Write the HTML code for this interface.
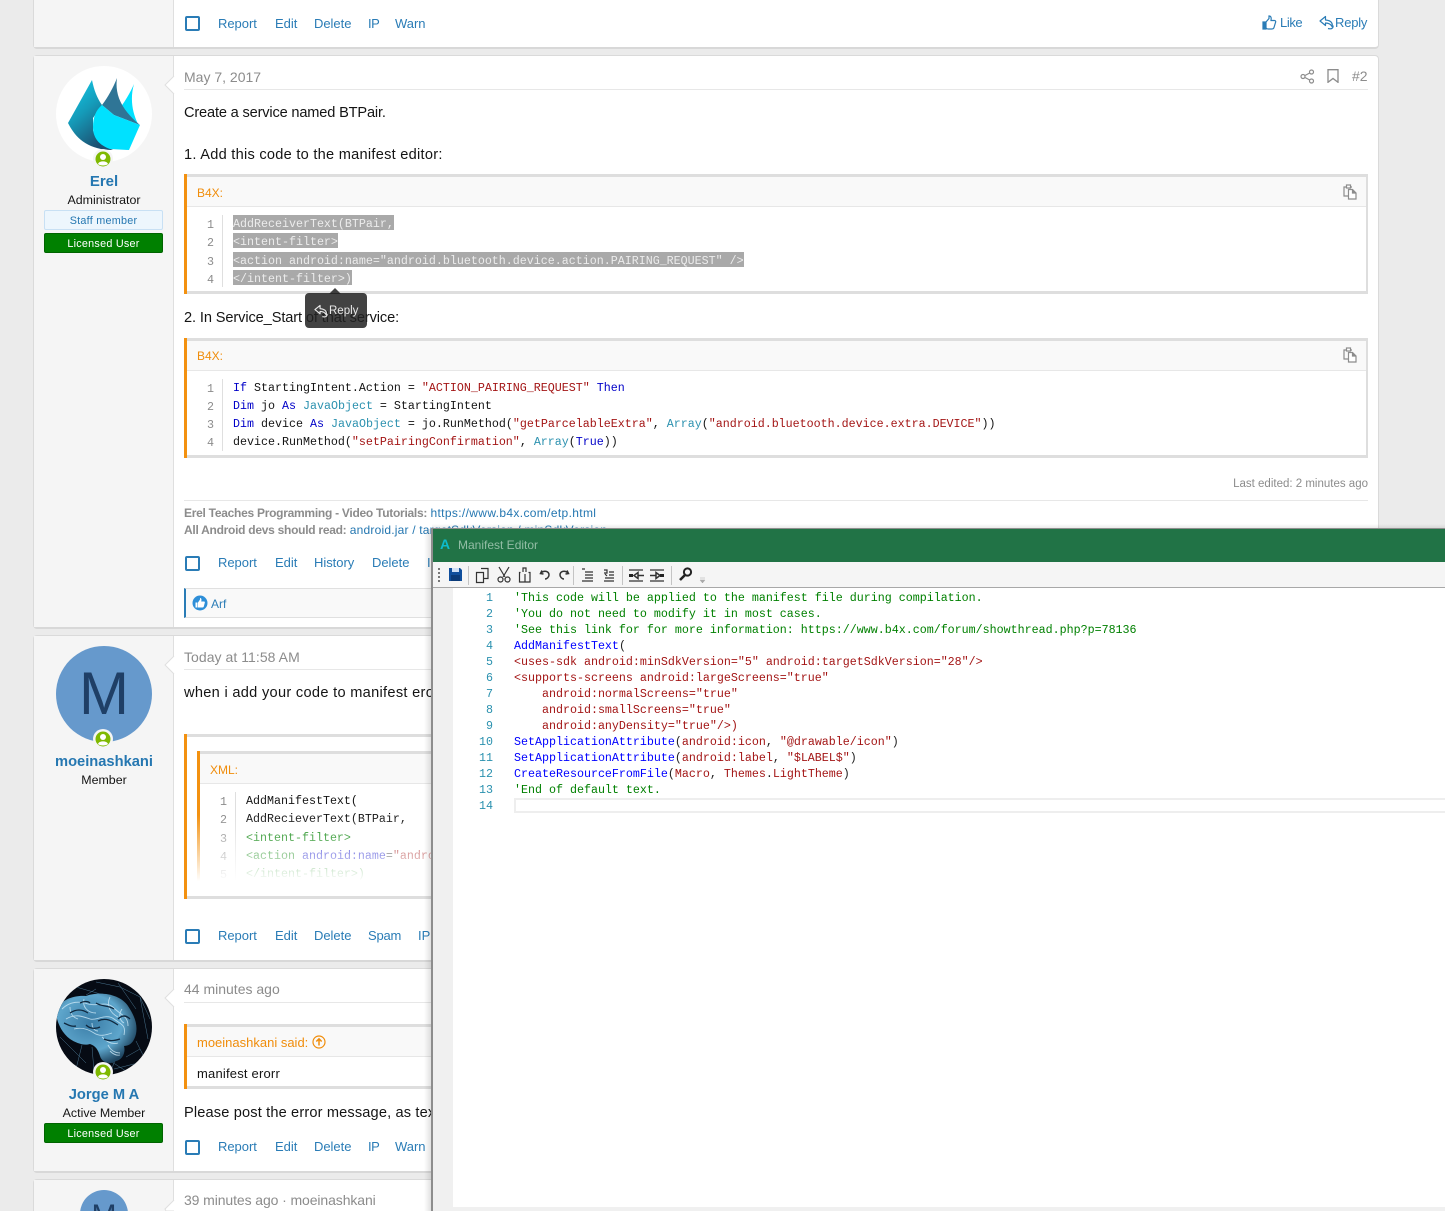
<!DOCTYPE html>
<html><head><meta charset="utf-8"><style>
html,body{margin:0;padding:0;width:1445px;height:1211px;overflow:hidden}
body{background:#ebebeb;font-family:"Liberation Sans",sans-serif;color:#141414}
#w{position:absolute;left:0;top:0;width:1445px;height:1211px;overflow:hidden;background:#ebebeb}
div,span.a{position:absolute;box-sizing:border-box}
.t{position:absolute;white-space:nowrap;line-height:20px;height:20px}
.card{left:33px;width:1346px;background:#fff;border:1px solid #dadada;border-bottom:2px solid #d8d8d8;border-radius:4px;overflow:hidden}
.side{left:34px;width:140px;background:#f5f5f5;border-right:1px solid #dfdfdf}
.l{color:#2a7cb6;font-size:13px;letter-spacing:-.03px}
.g{color:#8c8c8c;font-size:14px}
.b{font-size:14.6px;margin-top:1px}
.hr{height:1px;background:#e7e7e7}
.cb{width:15px;height:15px;left:185px;border:2px solid #2a7cb6;border-radius:2px;background:#fff}
.name{color:#2577b1;font-weight:bold;font-size:14.7px;width:140px;left:34px;text-align:center;margin-top:1px}
.role{font-size:12.4px;width:140px;left:34px;text-align:center}
.badge{left:44px;width:119px;height:20px;font-size:10.8px;line-height:21px;text-align:center;border-radius:2px;letter-spacing:.25px}
.lic{background:#008000;border:1px solid #006400;color:#fff}
.staff{background:#edf6fd;border:1px solid #c8e0f4;color:#2577b1}
.ava{left:56px;width:96px;height:96px;border-radius:50%;overflow:hidden;text-align:center}
.on{width:20px;height:20px;border-radius:50%;background:#f5f5f5}
.q{border:solid #dedede;border-width:3px 2px 3px 0;background:#fff}
.qb{position:absolute;left:0;top:-3px;bottom:-3px;width:3px;background:#f39110}
.qh{left:3px;right:0;top:0;height:30px;background:#f9f9f9;border-bottom:1px solid #e7e7e7}
.qt{color:#f08d0b;font-size:12px;margin-top:1px}
.m{font-family:"Liberation Mono",monospace;font-size:11.67px;line-height:16px;height:16px;position:absolute;white-space:pre}
.cd{margin-top:1px}
.n{color:#8c8c8c;text-align:right;width:14px}
.v{width:1px;background:#dfdfdf}
.sel{background:#a9a9a9;color:#ececec;line-height:18px;height:15px}
.ty{color:#2b91af}.st{color:#a31515}
.vb{color:#0000c8}
.c{color:#008000}.r{color:#a31515}.u{color:#0000ff}.d{color:#222}
.ln{left:463px;width:30px;color:#2a91af;text-align:right;margin-top:1px}
.tc{left:514px;margin-top:1px}
</style></head><body><div id="w">

<!-- post 1 -->
<div class="card" style="top:-10px;height:59px"></div>
<div class="side" style="top:0;height:47px"></div>
<div class="cb" style="top:16px"></div>
<span class="t l" style="left:218px;top:14px">Report</span>
<span class="t l" style="left:275px;top:14px">Edit</span>
<span class="t l" style="left:314px;top:14px">Delete</span>
<span class="t l" style="left:368px;top:14px;letter-spacing:-.5px">IP</span>
<span class="t l" style="left:395px;top:14px">Warn</span>
<svg style="position:absolute;left:1262px;top:15px" width="15" height="15" viewBox="0 0 15 15" fill="none" stroke="#2a7cb6" stroke-width="1.2"><path d="M1 7h3v7H1z" fill="#2a7cb6"/><path d="M4 7l3-3.5V1c2 0 2.5 1.500 2 4.500h3.500c1 0 1.500 1 1 2l-1.500 5c-.3 1-1 1.500-2 1.500H6c-1 0-1.500-.5-2-1"/></svg>
<span class="t l" style="left:1280px;top:13px;letter-spacing:-.4px">Like</span>
<svg style="position:absolute;left:1319px;top:15px" width="15" height="15" viewBox="0 0 15 15" fill="none" stroke="#2a7cb6" stroke-width="1.200" stroke-linejoin="round"><path d="M6.500 1.500L1 6l5.500 4.500V8c3 0 5 .8 6.500 3.500.700-2 .400-6-6.500-6.500z"/><path d="M9 13.500c3.500 1 5.500-.5 5-3"/></svg>
<span class="t l" style="left:1335px;top:13px;letter-spacing:-.2px">Reply</span>

<!-- post 2 -->
<div class="card" style="top:55px;height:574px"></div>
<div class="side" style="top:56px;height:571px"></div>
<svg style="position:absolute;left:164px;top:76px" width="11" height="20"><path d="M10 0L1 9l9 9" fill="#fff" stroke="#dfdfdf"/></svg>
<div class="ava" style="top:66px;background:#fff"></div>
<svg style="position:absolute;left:56px;top:66px" width="96" height="96" viewBox="56 66 96 96">
<defs><linearGradient id="s1" x1="0" y1="0" x2=".55" y2="1"><stop offset="0" stop-color="#12d0ee"/><stop offset=".5" stop-color="#159ab8"/><stop offset="1" stop-color="#1c4f70"/></linearGradient></defs>
<path d="M68 123L92 80c2 10 5 18 10 25L93 118v12c2 9 8 15 20 20-26 0-38-13-45-27z" fill="url(#s1)"/>
<path d="M134 84c-3 7-8 16-14 24l18 16c-6-12-8-26-4-40z" fill="#00e0ff"/>
<path d="M117 78c-2 14 2 30 23 47l-26-10-12-10c6-8 11-17 15-27z" fill="#2f7596"/>
<path d="M102 105l12 10 26 10-11 25-19-1c-11-4-17-11-17-22 0-10 3-17 9-22z" fill="#00e1ff"/>
</svg>
<div class="on" style="left:93px;top:149px"></div>
<svg style="position:absolute;left:95px;top:151px" width="16" height="16" viewBox="0 0 16 16"><circle cx="8" cy="8" r="7.500" fill="#7fb900"/><circle cx="8" cy="6" r="3" fill="#fff"/><path d="M3 13c1-3.500 9-3.500 10 0-2 2-8 2-10 0z" fill="#fff"/></svg>
<span class="t name" style="top:171px;font-size:15px">Erel</span>
<span class="t role" style="top:190px">Administrator</span>
<div class="badge staff" style="top:210px">Staff member</div>
<div class="badge lic" style="top:233px">Licensed User</div>

<span class="t g" style="left:184px;top:67px">May 7, 2017</span>
<div class="hr" style="left:184px;width:1184px;top:89px"></div>
<svg style="position:absolute;left:1300px;top:69px" width="15" height="15" viewBox="0 0 15 15" fill="none" stroke="#8c8c8c" stroke-width="1.200"><circle cx="3" cy="7.500" r="2"/><circle cx="11.500" cy="3" r="2"/><circle cx="11.500" cy="12" r="2"/><path d="M5 6.500l4.700-2.500M5 8.500l4.700 2.500"/></svg>
<svg style="position:absolute;left:1327px;top:69px" width="12" height="14" viewBox="0 0 12 14" fill="none" stroke="#8c8c8c" stroke-width="1.300"><path d="M1 .7h10v12.600L6 9.500l-5 3.800z"/></svg>
<span class="t g" style="left:1352px;top:66px">#2</span>

<span class="t b" style="left:184px;top:102px;letter-spacing:-.17px">Create a service named BTPair.</span>
<span class="t b" style="left:184px;top:144px;letter-spacing:.26px">1. Add this code to the manifest editor:</span>

<div class="q" style="left:184px;top:174px;width:1184px;height:120px"><div class="qb" style="left:0"></div><div class="qh"></div></div>
<span class="t qt" style="left:197px;top:182px">B4X:</span>
<svg style="position:absolute;left:1343px;top:184px" width="14" height="16" viewBox="0 0 14 16" fill="none" stroke="#8c8c8c" stroke-width="1.200"><path d="M3.500 3H1v9h4M9 3H7"/><rect x="3.500" y="1" width="4" height="3" fill="#fff"/><path d="M5.500 5.500h4l3.500 3.500v6h-7.500z" fill="#fff"/><path d="M9.500 5.500v3.500H13" fill="#8c8c8c"/></svg>
<div class="v" style="left:222px;top:215px;height:72px"></div>
<span class="m n" style="left:200px;top:217px">1</span><span class="m n" style="left:200px;top:235px">2</span><span class="m n" style="left:200px;top:254px">3</span><span class="m n" style="left:200px;top:272px">4</span>
<span class="m sel" style="left:233px;top:215px">AddReceiverText(BTPair,</span>
<span class="m sel" style="left:233px;top:233px">&lt;intent-filter&gt;</span>
<span class="m sel" style="left:233px;top:252px">&lt;action android:name="android.bluetooth.device.action.PAIRING_REQUEST" /&gt;</span>
<span class="m sel" style="left:233px;top:270px">&lt;/intent-filter&gt;)</span>

<span class="t b" style="left:184px;top:307px;letter-spacing:-.11px">2. In Service_Start of that service:</span>
<div style="left:305px;top:293px;width:62px;height:35px;background:rgba(35,35,35,.86);border-radius:4px"></div>
<svg style="position:absolute;left:329px;top:288px" width="12" height="6"><path d="M0 6L6 0l6 6z" fill="rgba(35,35,35,.86)"/></svg>
<svg style="position:absolute;left:314px;top:304px" width="14" height="14" viewBox="0 0 15 15" fill="none" stroke="#e8e8e8" stroke-width="1.200" stroke-linejoin="round"><path d="M6.500 1.500L1 6l5.500 4.500V8c3 0 5 .8 6.500 3.500.700-2 .400-6-6.500-6.500z"/><path d="M9 13.500c3.500 1 5.500-.5 5-3"/></svg>
<span class="t" style="left:329px;top:301px;font-size:11.500px;color:#e8e8e8">Reply</span>

<div class="q" style="left:184px;top:338px;width:1184px;height:120px"><div class="qb"></div><div class="qh"></div></div>
<span class="t qt" style="left:197px;top:345px">B4X:</span>
<svg style="position:absolute;left:1343px;top:347px" width="14" height="16" viewBox="0 0 14 16" fill="none" stroke="#8c8c8c" stroke-width="1.200"><path d="M3.500 3H1v9h4M9 3H7"/><rect x="3.500" y="1" width="4" height="3" fill="#fff"/><path d="M5.500 5.500h4l3.500 3.500v6h-7.500z" fill="#fff"/><path d="M9.500 5.500v3.500H13" fill="#8c8c8c"/></svg>
<div class="v" style="left:222px;top:379px;height:72px"></div>
<span class="m n" style="left:200px;top:381px">1</span><span class="m n" style="left:200px;top:399px">2</span><span class="m n" style="left:200px;top:417px">3</span><span class="m n" style="left:200px;top:435px">4</span>
<span class="m cd" style="left:233px;top:379px"><span class="vb">If</span> StartingIntent.Action = <span class="st">"ACTION_PAIRING_REQUEST"</span> <span class="vb">Then</span></span>
<span class="m cd" style="left:233px;top:397px"><span class="vb">Dim</span> jo <span class="vb">As</span> <span class="ty">JavaObject</span> = StartingIntent</span>
<span class="m cd" style="left:233px;top:415px"><span class="vb">Dim</span> device <span class="vb">As</span> <span class="ty">JavaObject</span> = jo.RunMethod(<span class="st">"getParcelableExtra"</span>, <span class="ty">Array</span>(<span class="st">"android.bluetooth.device.extra.DEVICE"</span>))</span>
<span class="m cd" style="left:233px;top:433px">device.RunMethod(<span class="st">"setPairingConfirmation"</span>, <span class="ty">Array</span>(<span class="vb">True</span>))</span>

<span class="t" style="right:77px;top:474px;font-size:11.500px;color:#8c8c8c">Last edited: 2 minutes ago</span>
<div class="hr" style="left:184px;width:1184px;top:500px"></div>
<span class="t" style="left:184px;top:503px;font-size:12px;color:#8c8c8c"><b style="letter-spacing:-.27px">Erel Teaches Programming - Video Tutorials:</b> <span style="color:#2577b1;letter-spacing:.35px">https://www.b4x.com/etp.html</span></span>
<span class="t" style="left:184px;top:520px;font-size:12px;color:#8c8c8c"><b style="letter-spacing:-.27px">All Android devs should read:</b> <span style="color:#2577b1;letter-spacing:.2px">android.jar / targetSdkVersion / minSdkVersion</span></span>
<div class="cb" style="top:556px"></div>
<span class="t l" style="left:218px;top:553px">Report</span>
<span class="t l" style="left:275px;top:553px">Edit</span>
<span class="t l" style="left:314px;top:553px">History</span>
<span class="t l" style="left:372px;top:553px">Delete</span>
<span class="t l" style="left:427px;top:553px">IP</span>
<div style="left:184px;top:588px;width:1184px;height:30px;background:#f9f9f9;border-top:1px solid #e0e0e0;border-bottom:1px solid #e0e0e0;border-left:2px solid #2a7cb6"></div>
<svg style="position:absolute;left:192px;top:595px" width="16" height="16" viewBox="0 0 16 16"><circle cx="8" cy="8" r="7.500" fill="#2e8fd8"/><path d="M3.500 7.500h2v5h-2zM6 7.500l2-3V3c1.500 0 1.800 1.500 1.200 3.500h2.800c.8 0 1 .7.800 1.300l-1 3.700c-.2.600-.6 1-1.300 1H6z" fill="#fff"/></svg>
<span class="t" style="left:211px;top:594px;font-size:12px;color:#2a7cb6">Arf</span>

<!-- post 3 -->
<div class="card" style="top:635px;height:327px"></div>
<div class="side" style="top:636px;height:324px"></div>
<svg style="position:absolute;left:164px;top:656px" width="11" height="20"><path d="M10 0L1 9l9 9" fill="#fff" stroke="#dfdfdf"/></svg>
<div class="ava" style="top:646px;background:#6699cc;color:#1f3f66;font-size:60px;line-height:96px">M</div>
<div class="on" style="left:93px;top:729px"></div>
<svg style="position:absolute;left:95px;top:731px" width="16" height="16" viewBox="0 0 16 16"><circle cx="8" cy="8" r="7.500" fill="#7fb900"/><circle cx="8" cy="6" r="3" fill="#fff"/><path d="M3 13c1-3.500 9-3.500 10 0-2 2-8 2-10 0z" fill="#fff"/></svg>
<span class="t name" style="top:751px">moeinashkani</span>
<span class="t role" style="top:770px">Member</span>
<span class="t g" style="left:184px;top:647px;letter-spacing:.05px">Today at 11:58 AM</span>
<div class="hr" style="left:184px;width:1184px;top:669px"></div>
<span class="t b" style="left:184px;top:682px;letter-spacing:.3px">when i add your code to manifest erorr</span>
<div class="q" style="left:184px;top:734px;width:1184px;height:165px"><div class="qb"></div></div>
<div style="left:197px;top:751px;width:1170px;height:135px;border-top:3px solid #dedede"><div class="qb" style="top:-3px;bottom:0"></div><div class="qh"></div></div>
<span class="t qt" style="left:210px;top:759px">XML:</span>
<div class="v" style="left:235px;top:792px;height:88px"></div>
<span class="m n" style="left:213px;top:794px">1</span><span class="m n" style="left:213px;top:812px">2</span><span class="m n" style="left:213px;top:831px">3</span><span class="m n" style="left:213px;top:849px">4</span><span class="m n" style="left:213px;top:867px">5</span>
<span class="m cd" style="left:246px;top:792px">AddManifestText(</span>
<span class="m cd" style="left:246px;top:810px">AddRecieverText(BTPair,</span>
<span class="m cd" style="left:246px;top:829px;color:#008000">&lt;intent-filter&gt;</span>
<span class="m cd" style="left:246px;top:847px"><span style="color:#008000">&lt;action</span> <span style="color:#0000c8">android:name</span>=<span class="st">"android.bluetooth.device.action.PAIRING_REQUEST"</span></span>
<span class="m cd" style="left:246px;top:865px;color:#008000">&lt;/intent-filter&gt;)</span>
<div style="left:187px;top:815px;width:1180px;height:72px;background:linear-gradient(to bottom,rgba(255,255,255,0),#fff 92%)"></div>
<div class="cb" style="top:929px"></div>
<span class="t l" style="left:218px;top:926px">Report</span>
<span class="t l" style="left:275px;top:926px">Edit</span>
<span class="t l" style="left:314px;top:926px">Delete</span>
<span class="t l" style="left:368px;top:926px;letter-spacing:-.2px">Spam</span>
<span class="t l" style="left:418px;top:926px">IP</span>

<!-- post 4 -->
<div class="card" style="top:968px;height:205px"></div>
<div class="side" style="top:969px;height:202px"></div>
<svg style="position:absolute;left:164px;top:989px" width="11" height="20"><path d="M10 0L1 9l9 9" fill="#fff" stroke="#dfdfdf"/></svg>
<svg style="position:absolute;left:56px;top:979px" width="96" height="96" viewBox="0 0 96 96">
<defs><clipPath id="cc"><circle cx="48" cy="48" r="48"/></clipPath><radialGradient id="br" cx=".42" cy=".42" r=".62"><stop offset="0" stop-color="#3a7ca6"/><stop offset=".65" stop-color="#5ea6cc"/><stop offset="1" stop-color="#1f4560"/></radialGradient></defs>
<g clip-path="url(#cc)"><rect width="96" height="96" fill="#060b14"/>
<g fill="none" stroke="#4a7590" stroke-width=".5"><path d="M40 3L64 8 84 18 94 40M62 4L80 30M20 8L48 16M84 18L92 60M80 62L90 82 58 90M62 74L54 94M36 68L38 92M26 66L20 90M4 58L30 84M70 78L84 70M48 78L70 92M40 10L30 16"/></g>
<path d="M0 34C2 22 16 16 30 17c14-5 34-2 42 10 6 9 10 18 8 28-2 8-6 12-12 12 2 7-2 14-8 15-6 4-14 2-16-5-2-6-4-10-10-12-6 2-14-1-20-5C6 54 1 44 0 34z" fill="url(#br)"/>
<g fill="none" stroke="#cfeaf8" stroke-width=".9" opacity=".8"><path d="M6 30c8-8 18-8 26-5s18-4 26 4 14 8 14 18M10 40c10-6 18-2 24 0s16-6 24 0 12 6 10 16M18 50c8-2 14 0 20 4s12 2 18 0M46 58c4 4 10 8 16 6M28 20c-2 8 4 14 12 14M54 18c-4 8 0 16 8 20M14 28c0 6 2 10 8 12M66 30c-4 6-2 12 2 14M36 44c0 4 2 8 6 8M52 66c2 4 6 8 12 8M54 72c3 3 6 5 10 4"/></g>
<g fill="none" stroke="#10283e" stroke-width="1.300"><path d="M14 34c6-4 12-4 18 0M40 24c6 4 12 2 18 6M42 42c8-4 14 0 20 4M30 46c4 4 10 4 14 2M62 40c4-4 8-4 12 0M48 60c4 2 10 2 16 0M24 24c4-2 8-2 10 0M8 44c4 2 8 4 12 3"/></g>
</g></svg>
<div class="on" style="left:93px;top:1062px"></div>
<svg style="position:absolute;left:95px;top:1064px" width="16" height="16" viewBox="0 0 16 16"><circle cx="8" cy="8" r="7.500" fill="#7fb900"/><circle cx="8" cy="6" r="3" fill="#fff"/><path d="M3 13c1-3.500 9-3.500 10 0-2 2-8 2-10 0z" fill="#fff"/></svg>
<span class="t name" style="top:1084px">Jorge M A</span>
<span class="t role" style="top:1103px">Active Member</span>
<div class="badge lic" style="top:1123px">Licensed User</div>
<span class="t g" style="left:184px;top:979px">44 minutes ago</span>
<div class="hr" style="left:184px;width:1184px;top:1002px"></div>
<div class="q" style="left:184px;top:1024px;width:1184px;height:65px"><div class="qb"></div><div class="qh"></div></div>
<span class="t" style="left:197px;top:1033px;font-size:13px;color:#f08d0b">moeinashkani said:</span>
<svg style="position:absolute;left:312px;top:1035px" width="14" height="14" viewBox="0 0 14 14" fill="none" stroke="#f08d0b" stroke-width="1.200"><circle cx="7" cy="7" r="6"/><path d="M7 10.500V4M4.300 6.500L7 3.800l2.700 2.700" stroke-width="1.500"/></svg>
<span class="t" style="left:197px;top:1064px;font-size:13px;letter-spacing:.2px">manifest erorr</span>
<span class="t b" style="left:184px;top:1102px;letter-spacing:.15px">Please post the error message, as text.</span>
<div class="cb" style="top:1140px"></div>
<span class="t l" style="left:218px;top:1137px">Report</span>
<span class="t l" style="left:275px;top:1137px">Edit</span>
<span class="t l" style="left:314px;top:1137px">Delete</span>
<span class="t l" style="left:368px;top:1137px;letter-spacing:-.5px">IP</span>
<span class="t l" style="left:395px;top:1137px">Warn</span>

<!-- post 5 -->
<div class="card" style="top:1179px;height:60px"></div>
<div class="side" style="top:1180px;height:31px"></div>
<svg style="position:absolute;left:164px;top:1200px" width="11" height="11"><path d="M10 0L1 9l1 2h8" fill="#fff" stroke="#dfdfdf"/></svg>
<div class="ava" style="top:1190px;left:80px;width:48px;height:48px;background:#6699cc;color:#1f3f66;font-size:30px;line-height:52px">M</div>
<span class="t g" style="left:184px;top:1190px;letter-spacing:-.1px">39 minutes ago · moeinashkani</span>

<!-- editor -->
<div style="left:424px;top:529px;width:8px;height:682px;background:linear-gradient(to right,rgba(0,0,0,0),rgba(0,0,0,.13))"></div>
<div style="left:432px;top:524px;width:1013px;height:5px;background:linear-gradient(to bottom,rgba(0,0,0,0),rgba(0,0,0,.1))"></div>
<div style="left:431px;top:528px;width:1014px;height:683px;background:#fff;border-left:2px solid #8d8d8d;border-top:1px solid #8d8d8d"></div>
<div style="left:433px;top:529px;width:1012px;height:33px;background:#217346"></div>
<span class="t" style="left:440px;top:534px;font-size:14px;font-weight:bold;color:#0dbccb">A</span>
<span class="t" style="left:458px;top:535px;font-size:12px;color:#93bda5">Manifest Editor</span>
<div style="left:433px;top:562px;width:1012px;height:26px;background:#f5f5f5;border-bottom:1px solid #a8a8a8"></div>
<svg style="position:absolute;left:433px;top:562px" width="290" height="26" viewBox="433 562 290 26">
<g fill="#777"><rect x="438" y="568" width="2" height="2"/><rect x="438" y="572" width="2" height="2"/><rect x="438" y="576" width="2" height="2"/><rect x="438" y="580" width="2" height="2"/></g>
<path d="M449 568h11l2 2v11h-13z" fill="#0f4e9c"/><rect x="452" y="568" width="7" height="4" fill="#cfe0f5"/><rect x="451" y="575" width="9" height="6" fill="#0a3a78"/>
<g fill="#c4c4c4"><rect x="468" y="566" width="1" height="19"/><rect x="622" y="566" width="1" height="19"/><rect x="573" y="566" width="1" height="19"/><rect x="671" y="566" width="1" height="19"/></g>
<g fill="none" stroke="#333" stroke-width="1.200">
<path d="M481 568.500h7v10h-4M476.500 572.500h7v10h-7z"/>
<path d="M499 567l6 10M509 567l-6 10"/><circle cx="500.500" cy="579.500" r="2.500"/><circle cx="507.500" cy="579.500" r="2.500"/>
<path d="M520.500 572.500h-1v9.500h10.500v-9.500h-1.500M523 572v-4h3v4M525 574v8"/>
<path d="M542 570.500l-1.500 3 3 .5M541 573c3-3 8-2 8 2 0 2-2 4-4 4" stroke-width="1.500"/>
<path d="M567 570.500l1.500 3-3 .5M568 573c-3-3-8-2-8 2 0 2 2 4 4 4" stroke-width="1.500"/>
<path d="M582 569h3M585 572h8M585 575h8M585 578h8M582 581h11"/>
<path d="M604 570h3v3h-3M609 572h5M609 575h5M605 578h9M604 581h10M605 574l2 2"/>
<path d="M629 570h14M629 581h14"/>
<path d="M638 575.500h6M634 575.500l4-3v6z" stroke-width="1.500"/>
<path d="M650 570h14M650 581h14"/><path d="M650 575.500h6M660 575.500l-4-3v6z" stroke-width="1.500"/>
</g>
<g fill="#222"><rect x="629" y="574" width="4" height="3"/><rect x="660" y="574" width="4" height="3"/></g>
<circle cx="687.500" cy="572" r="3.600" fill="none" stroke="#222" stroke-width="2"/><path d="M685 575l-5 5" stroke="#222" stroke-width="2.600"/>
<path d="M700 578h5M700 580h5l-2.500 3z" fill="#aaa" stroke="#aaa" stroke-width=".5"/>
</svg>
<div style="left:433px;top:588px;width:20px;height:623px;background:#f0f0f0"></div>
<div style="left:433px;top:1207px;width:1012px;height:4px;background:#f0f0f0"></div>

<span class="m ln" style="top:589px">1</span><span class="m ln" style="top:605px">2</span><span class="m ln" style="top:621px">3</span><span class="m ln" style="top:637px">4</span><span class="m ln" style="top:653px">5</span><span class="m ln" style="top:669px">6</span><span class="m ln" style="top:685px">7</span><span class="m ln" style="top:701px">8</span><span class="m ln" style="top:717px">9</span><span class="m ln" style="top:733px">10</span><span class="m ln" style="top:749px">11</span><span class="m ln" style="top:765px">12</span><span class="m ln" style="top:781px">13</span><span class="m ln" style="top:797px">14</span>
<span class="m tc c" style="top:589px">'This code will be applied to the manifest file during compilation.</span>
<span class="m tc c" style="top:605px">'You do not need to modify it in most cases.</span>
<span class="m tc c" style="top:621px">'See this link for for more information: https://www.b4x.com/forum/showthread.php?p=78136</span>
<span class="m tc" style="top:637px"><span class="u">AddManifestText</span><span class="d">(</span></span>
<span class="m tc r" style="top:653px">&lt;uses-sdk android:minSdkVersion="5" android:targetSdkVersion="28"/&gt;</span>
<span class="m tc r" style="top:669px">&lt;supports-screens android:largeScreens="true"</span>
<span class="m tc r" style="top:685px">    android:normalScreens="true"</span>
<span class="m tc r" style="top:701px">    android:smallScreens="true"</span>
<span class="m tc r" style="top:717px">    android:anyDensity="true"/&gt;)</span>
<span class="m tc r" style="top:733px"><span class="u">SetApplicationAttribute</span><span class="d">(</span>android:icon<span class="d">,</span> "@drawable/icon"<span class="d">)</span></span>
<span class="m tc r" style="top:749px"><span class="u">SetApplicationAttribute</span><span class="d">(</span>android:label<span class="d">,</span> "$LABEL$"<span class="d">)</span></span>
<span class="m tc r" style="top:765px"><span class="u">CreateResourceFromFile</span><span class="d">(</span>Macro<span class="d">,</span> Themes<span class="d">.</span>LightTheme<span class="d">)</span></span>
<span class="m tc c" style="top:781px">'End of default text.</span>
<div style="left:514px;top:798px;width:931px;height:15px;border:2px solid #eeeeee;border-right:0"></div>
</div></body></html>
